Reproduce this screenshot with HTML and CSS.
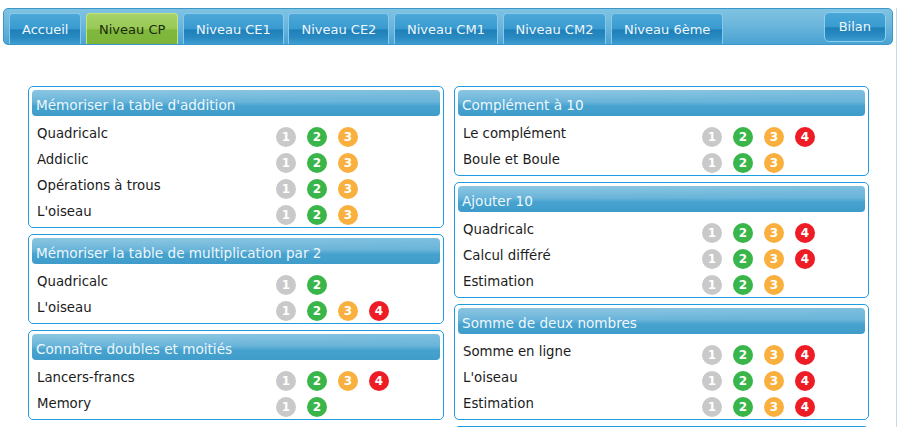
FILE: index.html
```html
<!DOCTYPE html>
<html lang="fr">
<head>
    <meta charset="UTF-8">
    <meta name="viewport" content="width=device-width, initial-scale=1.0">
    <title>Niveau CP</title>
    <link rel="stylesheet" href="styles.css">
</head>
<body>
<div class="page">

    <!-- barre de navigation -->
    <div class="nav">
        <a class="tab" href="#">Accueil</a>
        <a class="tab active" href="#">Niveau CP</a>
        <a class="tab" href="#">Niveau CE1</a>
        <a class="tab" href="#">Niveau CE2</a>
        <a class="tab" href="#">Niveau CM1</a>
        <a class="tab" href="#">Niveau CM2</a>
        <a class="tab" href="#">Niveau 6ème</a>
        <a class="bilan" href="#">Bilan</a>
    </div>

    <div class="content">

        <div class="col col-left">
            <div class="panel">
                <div class="head">Mémoriser la table d'addition</div>
                <div class="row"><span class="name">Quadricalc</span><span class="lvl"><i class="b1">1</i><i class="b2">2</i><i class="b3">3</i></span></div>
                <div class="row"><span class="name">Addiclic</span><span class="lvl"><i class="b1">1</i><i class="b2">2</i><i class="b3">3</i></span></div>
                <div class="row"><span class="name">Opérations à trous</span><span class="lvl"><i class="b1">1</i><i class="b2">2</i><i class="b3">3</i></span></div>
                <div class="row"><span class="name">L'oiseau</span><span class="lvl"><i class="b1">1</i><i class="b2">2</i><i class="b3">3</i></span></div>
            </div>

            <div class="panel">
                <div class="head">Mémoriser la table de multiplication par 2</div>
                <div class="row"><span class="name">Quadricalc</span><span class="lvl"><i class="b1">1</i><i class="b2">2</i></span></div>
                <div class="row"><span class="name">L'oiseau</span><span class="lvl"><i class="b1">1</i><i class="b2">2</i><i class="b3">3</i><i class="b4">4</i></span></div>
            </div>

            <div class="panel">
                <div class="head">Connaître doubles et moitiés</div>
                <div class="row"><span class="name">Lancers-francs</span><span class="lvl"><i class="b1">1</i><i class="b2">2</i><i class="b3">3</i><i class="b4">4</i></span></div>
                <div class="row"><span class="name">Memory</span><span class="lvl"><i class="b1">1</i><i class="b2">2</i></span></div>
            </div>
        </div>

        <div class="col col-right">
            <div class="panel">
                <div class="head">Complément à 10</div>
                <div class="row"><span class="name">Le complément</span><span class="lvl"><i class="b1">1</i><i class="b2">2</i><i class="b3">3</i><i class="b4">4</i></span></div>
                <div class="row"><span class="name">Boule et Boule</span><span class="lvl"><i class="b1">1</i><i class="b2">2</i><i class="b3">3</i></span></div>
            </div>

            <div class="panel">
                <div class="head">Ajouter 10</div>
                <div class="row"><span class="name">Quadricalc</span><span class="lvl"><i class="b1">1</i><i class="b2">2</i><i class="b3">3</i><i class="b4">4</i></span></div>
                <div class="row"><span class="name">Calcul différé</span><span class="lvl"><i class="b1">1</i><i class="b2">2</i><i class="b3">3</i><i class="b4">4</i></span></div>
                <div class="row"><span class="name">Estimation</span><span class="lvl"><i class="b1">1</i><i class="b2">2</i><i class="b3">3</i></span></div>
            </div>

            <div class="panel">
                <div class="head">Somme de deux nombres</div>
                <div class="row"><span class="name">Somme en ligne</span><span class="lvl"><i class="b1">1</i><i class="b2">2</i><i class="b3">3</i><i class="b4">4</i></span></div>
                <div class="row"><span class="name">L'oiseau</span><span class="lvl"><i class="b1">1</i><i class="b2">2</i><i class="b3">3</i><i class="b4">4</i></span></div>
                <div class="row"><span class="name">Estimation</span><span class="lvl"><i class="b1">1</i><i class="b2">2</i><i class="b3">3</i><i class="b4">4</i></span></div>
            </div>

            <div class="panel">
                <div class="head">Retrancher 10</div>
                <div class="row"><span class="name">Quadricalc</span><span class="lvl"><i class="b1">1</i><i class="b2">2</i><i class="b3">3</i></span></div>
            </div>
        </div>

    </div>
</div>
</body>
</html>
```

FILE: styles.css
```css
*{
    margin: 0;
    padding: 0;
    box-sizing: border-box;
}

body{
    font-family: "DejaVu Sans", Verdana, sans-serif;
    background: #fff;
    color: #1c1c1c;
    overflow: hidden;
}

.page{
    width: 897px;
    min-height: 100vh;
    border-right: 1px solid #c4dbe9;
}

/* navigation */
.nav{
    display: flex;
    align-items: flex-end;
    height: 37px;
    margin: 8px 3px 0 3px;
    padding: 0 6px 0 5px;
    border: 1px solid #3b97c9;
    border-radius: 5px;
    background: linear-gradient(to bottom, #80c3e2 0%, #6cb6dc 45%, #4aa3d2 100%);
}

.tab{
    display: block;
    height: 31px;
    line-height: 32px;
    padding: 0 12px;
    margin-right: 4.6px;
    font-size: 13px;
    color: #eef7fc;
    text-decoration: none;
    border: 1px solid #86c9ec;
    border-bottom: 0;
    border-radius: 4px 4px 0 0;
    background: linear-gradient(to bottom, #4ca8d8 0%, #3a9bd0 48%, #1f80b9 54%, #2a8bc3 80%, #3d9dd0 100%);
}

.tab.active{
    color: #1b2a0c;
    border-color: #c5e381;
    background: linear-gradient(to bottom, #a6d267 0%, #98c956 48%, #80b83e 54%, #7cb53a 100%);
}

.bilan{
    display: block;
    margin-left: auto;
    align-self: center;
    height: 30px;
    line-height: 28px;
    padding: 0 14px;
    font-size: 13px;
    color: #eef7fc;
    text-decoration: none;
    border: 1px solid #8bcff0;
    border-radius: 5px;
    background: linear-gradient(to bottom, #4aa7d7 0%, #3a9bd0 48%, #1f80b9 54%, #2a8bc3 80%, #3d9dd0 100%);
}

/* contenu */
.content{
    display: flex;
    align-items: flex-start;
    gap: 10px;
    margin: 41px 0 0 28px;
}

.col-left{ width: 416px; }
.col-right{ width: 415px; }

.panel{
    border: 1px solid #1f9be0;
    border-radius: 5px;
    padding: 3px;
    margin-bottom: 6px;
}

.head{
    height: 26px;
    padding: 4px 0 0 4px;
    line-height: 22px;
    font-size: 13.6px;
    color: #eef7fb;
    border-radius: 4px;
    margin-bottom: 4px;
    background:
        radial-gradient(ellipse 120% 60% at 20% 0%, rgba(255,255,255,0.12), rgba(255,255,255,0) 70%),
        linear-gradient(to bottom, #7dbfde 0%, #6bb5da 45%, #47a2cf 62%, #3f9cca 100%);
}

.row{
    display: flex;
    height: 26px;
}

.name{
    flex: 0 0 244px;
    padding: 6px 0 0 5px;
    font-size: 13.3px;
    line-height: 16px;
}

.lvl{
    display: flex;
    gap: 11px;
    padding-top: 7px;
}

.lvl i{
    display: block;
    width: 20px;
    height: 20px;
    border-radius: 50%;
    font-style: normal;
    font-weight: bold;
    font-size: 12px;
    line-height: 20px;
    text-align: center;
    color: #fff;
}

.b1{ background: #c9c9c9; }
.b2{ background: #39b54a; }
.b3{ background: #f9b03f; }
.b4{ background: #ee1c25; }
```
